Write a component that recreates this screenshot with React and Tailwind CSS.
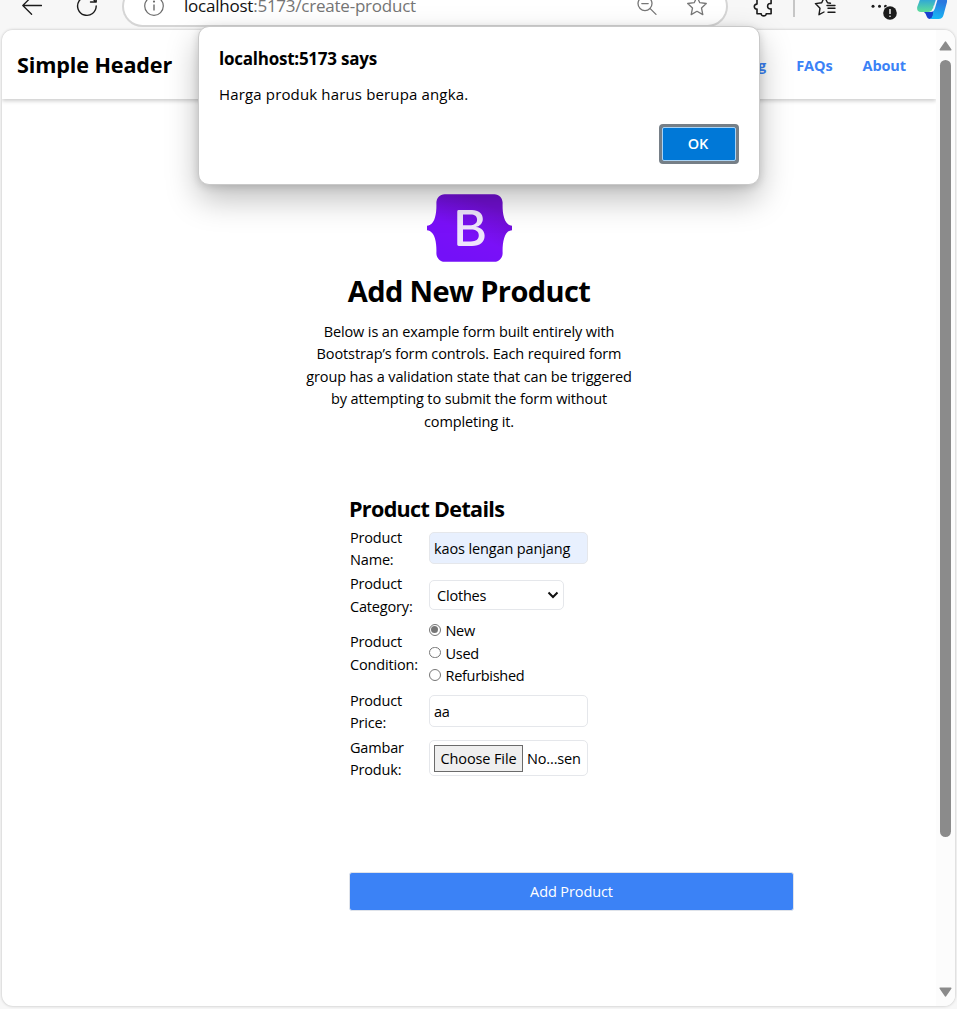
import React from "react";

function Toolbar() {
  return (
    <div className="h-[30px] shrink-0 overflow-hidden">
      <div className="-mt-[14px] flex h-10 items-center text-[#1b1b1b]">
        <svg className="ml-[22px] h-5 w-5 shrink-0" viewBox="0 0 20 20" fill="none" stroke="currentColor" strokeWidth="1.3" strokeLinecap="round" strokeLinejoin="round">
          <path d="M19.5 9.5H.8M9.6 .7.8 9.5l8.8 8.8" />
        </svg>
        <svg className="ml-[35px] h-5 w-5 shrink-0 overflow-visible" viewBox="0 0 20 20" fill="none" stroke="currentColor" strokeWidth="1.4" strokeLinecap="round" strokeLinejoin="round">
          <path d="M19.2 10A9.3 9.3 0 1 1 16.8 3.8L18.8 6M19.2 .5V6H13.5" />
        </svg>
        <div className="ml-[25px] flex h-[41px] w-[606px] shrink-0 items-center rounded-full border-2 border-t-0 border-[#d5d5d5] bg-white pl-[20px] pt-px">
          <svg className="h-5 w-5 shrink-0" viewBox="0 0 20 20" fill="none" stroke="#6b6b6b" strokeWidth="1.2">
            <circle cx="10" cy="10" r="9.3" />
            <path d="M10 8.5v6" strokeWidth="1.4" />
            <circle cx="10" cy="5.6" r=".5" fill="#6b6b6b" />
          </svg>
          <span className="ml-[20px] w-[453px] whitespace-nowrap text-[17px] leading-none tracking-[-0.230px] text-[#757575]"><span className="text-[#111]">localhost</span>:5173/create-product</span>
          <svg className="h-5 w-5 shrink-0 overflow-visible" viewBox="0 0 20 20" fill="none" stroke="#777" strokeWidth="1.3" strokeLinecap="round">
            <circle cx="8" cy="7.6" r="7" />
            <path d="m13.2 12.6 5.8 5.8M4.8 7.6h6.4" />
          </svg>
          <svg className="ml-[30px] h-5 w-5 shrink-0 overflow-visible" viewBox="0 0 20 20" fill="none" stroke="#777" strokeWidth="1.3" strokeLinejoin="round">
            <path d="m10 .8 2.8 5.9 6.5.8-4.8 4.5 1.3 6.6-5.8-3.3-5.8 3.3L5.5 12 .7 7.5l6.5-.8z" />
          </svg>
        </div>
        <svg className="ml-[26px] h-5 w-5 shrink-0 overflow-visible" viewBox="0 0 20 20" fill="none" stroke="currentColor" strokeWidth="1.6" strokeLinejoin="round">
          <path d="M3 3h4.2a2.6 2.6 0 0 1 5 0h4.9v4.600c-2-.5-3.500.6-3.500 2.600s1.500 3.100 3.500 2.600v5h-4.900c.2 2.700-5.200 2.700-5 0H3v-4.700c-3.600.1-3.600-5.100 0-5z" />
        </svg>
        <div className="ml-[19px] h-[22px] w-[2px] shrink-0 bg-[#c6c6c6]" />
        <svg className="ml-[20px] h-5 w-[21px] shrink-0 overflow-visible" viewBox="0 0 21 20" fill="none" stroke="currentColor" strokeWidth="1.4" strokeLinejoin="round" strokeLinecap="round">
          <path d="M15.5 7.2 12.5 6.7 9.5.8 6.7 6.7.4 7.6l4.6 4.6-1 6.500 5-2.700M12 9.500h8M13 12.300h7M13 16.200h7" />
        </svg>
        <svg className="ml-[35px] h-[20px] w-[27px] shrink-0 overflow-visible" viewBox="0 0 27 20" fill="#1b1b1b">
          <circle cx="2" cy="10.300" r="1.500" />
          <circle cx="8.500" cy="10.300" r="1.500" />
          <circle cx="14.500" cy="10.300" r="1.500" />
          <circle cx="19" cy="17" r="7.500" fill="#f7f7f7" />
          <circle cx="19" cy="17" r="6.800" />
          <path d="M19 13v5" stroke="#fff" strokeWidth="1.400" />
          <circle cx="19" cy="20.300" r=".8" fill="#fff" />
        </svg>
        <svg className="ml-[19px] h-[30px] w-[30px] shrink-0 overflow-visible" viewBox="0 0 30 30">
          <defs>
            <linearGradient id="cpLeft" x1="0" y1="0" x2="0" y2="1">
              <stop offset=".3" stopColor="#2fa6d8" />
              <stop offset=".95" stopColor="#5bdb9c" />
            </linearGradient>
            <linearGradient id="cpRight" x1=".6" y1="0" x2=".4" y2="1">
              <stop offset=".2" stopColor="#2b78df" />
              <stop offset="1" stopColor="#18b8f4" />
            </linearGradient>
          </defs>
          <path d="M8 21h6l3-1-1 5q-.8 3-3 3-2.500 0-3.500-3-.6-2.500-2.500-4z" fill="#1740cf" />
          <path d="M18 6h9q3.500 0 3 5l-3.500 13q-1 4-5 4H12.500q2.500-.5 3.300-4z" fill="url(#cpRight)" />
          <path d="M5 3h15.500l-4.500 14q-1.200 4-5 4H4q-4.500 0-3.800-5z" fill="url(#cpLeft)" />
          <path d="M20 7.500l-2.800 9.500q-.6 1.800-1.800 3" fill="none" stroke="#f7f7f7" strokeWidth="1.600" />
        </svg>
      </div>
    </div>
  );
}

function Header() {
  return (
    <header className="flex h-[69px] shrink-0 items-center justify-between bg-white pl-[15px] pr-[30px] pt-[2px] shadow-[0_2px_4px_rgba(0,0,0,0.2)]">
      <h1 className="text-[21.600px] font-bold tracking-[-0.130px] text-black">Simple Header</h1>
      <nav className="flex gap-[30px] text-[14.500px] font-bold tracking-[-0.100px] text-[#3b82f6]">
        <a>Blog</a>
        <a>FAQs</a>
        <a>About</a>
      </nav>
    </header>
  );
}

function BootstrapLogo() {
  return (
    <svg className="h-[68px] w-[85px]" viewBox="0 0 118 94">
      <defs>
        <linearGradient id="shell" x1="76" y1="10.800" x2="40" y2="90" gradientUnits="userSpaceOnUse">
          <stop stopColor="#6f0fce" />
          <stop offset=".55" stopColor="#7a10f8" />
          <stop offset="1" stopColor="#7410f8" />
        </linearGradient>
      </defs>
      <path fill="url(#shell)" fillRule="evenodd" d="M24.509 0c-6.733 0-11.715 5.893-11.492 12.284.214 6.140-.064 14.092-2.066 20.577C8.943 39.365 5.547 43.485 0 44.014v5.972c5.547.529 8.943 4.649 10.951 11.153 2.002 6.485 2.280 14.437 2.066 20.577C12.794 88.106 17.776 94 24.510 94H93.500c6.733 0 11.714-5.893 11.491-12.284-.214-6.140.064-14.092 2.066-20.577 2.009-6.504 5.396-10.624 10.943-11.153v-5.972c-5.547-.529-8.934-4.649-10.943-11.153-2.002-6.484-2.280-14.437-2.066-20.577C105.214 5.894 100.233 0 93.500 0H24.508z" />
      <path fill="#eee4fb" fillRule="evenodd" d="M80 57.863C80 66.663 73.436 72 62.543 72H44a2 2 0 01-2-2V24a2 2 0 012-2h18.437c9.083 0 15.044 4.920 15.044 12.474 0 5.302-4.010 10.049-9.119 10.880v.277C75.317 46.394 80 51.210 80 57.863zM60.521 28.340H49.948v14.934h8.905c6.884 0 10.680-2.772 10.680-7.727 0-4.643-3.264-7.207-9.012-7.207zM49.948 49.200v16.458H60.910c7.167 0 10.964-2.876 10.964-8.281 0-5.406-3.903-8.178-11.425-8.178H49.948z" />
    </svg>
  );
}

function Intro() {
  const lines = [
    "Below is an example form built entirely with",
    "Bootstrap’s form controls. Each required form",
    "group has a validation state that can be triggered",
    "by attempting to submit the form without",
    "completing it.",
  ];
  return (
    <section className="flex flex-col items-center pt-[95px]">
      <BootstrapLogo />
      <h2 className="mt-[6px] text-[29px] font-bold leading-[45px] tracking-[-0.600px]">Add New Product</h2>
      <p className="mt-[7.500px] text-center leading-[22.500px] tracking-[-0.120px]">
        {lines.map((line) => (
          <span key={line} className="block whitespace-nowrap">{line}</span>
        ))}
      </p>
    </section>
  );
}

function Label({ first, second }) {
  return (
    <span className="block w-[79px] shrink-0 leading-[22.500px] tracking-[-0.170px]">
      {first}
      <br />
      {second}
    </span>
  );
}

function Radio({ label, checked }) {
  return (
    <div className="flex h-[22.500px] items-center gap-[5px]">
      <span className="mb-[3px] flex h-[11.500px] w-[11.500px] items-center justify-center rounded-full border border-[#767676]">
        {checked && <span className="h-[7px] w-[7px] rounded-full bg-[#767676]" />}
      </span>
      <span>{label}</span>
    </div>
  );
}

function ProductForm() {
  return (
    <section className="ml-[348px] mt-[58.500px] w-[443px]">
      <h3 className="-ml-px text-[21.600px] font-bold leading-[34px] tracking-[-0.700px]">Product Details</h3>
      <div className="mt-px flex h-[45px] items-center">
        <Label first="Product" second="Name:" />
        <div className="mb-[2px] flex h-8 w-[159px] items-center rounded-[5px] border border-[#e5e7eb] bg-[#e8f0fe] px-1 pt-px tracking-[-0.130px]">kaos lengan panjang</div>
      </div>
      <div className="mt-[1.500px] flex h-[45px] items-center">
        <Label first="Product" second="Category:" />
        <div className="mb-[2px] flex h-[30px] w-[135px] items-center justify-between rounded-[5px] border border-[#e5e7eb] bg-white pl-[7px] pr-1 pt-px">
          <span className="pt-[2px] tracking-[-0.200px]">Clothes</span>
          <svg className="h-3 w-3" viewBox="0 0 12 12" fill="none" stroke="#111" strokeWidth="2">
            <path d="M1.500 3.500 6 8l4.500-4.500" />
          </svg>
        </div>
      </div>
      <div className="mt-[2px] flex h-[67.500px] items-center">
        <Label first="Product" second="Condition:" />
        <div>
          <Radio label="New" checked />
          <Radio label="Used" />
          <Radio label="Refurbished" />
        </div>
      </div>
      <div className="mt-[2px] flex h-[45px] items-center">
        <Label first="Product" second="Price:" />
        <div className="mb-[2px] flex h-8 w-[159px] items-center rounded-[5px] border border-[#e5e7eb] bg-white px-1 pt-px">aa</div>
      </div>
      <div className="mt-[2px] flex h-[45px] items-center">
        <Label first="Gambar" second="Produk:" />
        <div className="mb-[2px] flex h-[36px] w-[159px] items-center whitespace-nowrap rounded-[5px] border border-[#e5e7eb] bg-white pl-1">
          <span className="flex h-[27px] w-[89px] items-center justify-center border border-[#6b6b6b] bg-[#efefef] pt-px tracking-[-0.120px]">Choose File</span>
          <span className="ml-1 pt-px tracking-[-0.150px]">No...sen</span>
        </div>
      </div>
      <div className="-ml-px mt-[90.500px] flex h-[38.500px] w-[445px] items-center justify-center rounded-[3px] border border-[#dfe3ea] bg-[#3b82f6] pt-px tracking-[-0.100px] text-white">Add Product</div>
    </section>
  );
}

function Scrollbar() {
  return (
    <div className="flex w-[19px] shrink-0 flex-col items-center bg-[#fcfcfc] pb-[9px] pt-[11px]">
      <svg className="h-[10px] w-[13px] shrink-0" viewBox="0 0 13 10">
        <path d="M6.500 1.200 11.700 8.800H1.300z" fill="#8b8b8b" stroke="#8b8b8b" strokeWidth="1.600" strokeLinejoin="round" />
      </svg>
      <div className="mt-[9px] h-[777px] w-[11px] shrink-0 rounded-full bg-[#8b8b8b]" />
      <svg className="mt-auto h-[10px] w-[13px] shrink-0" viewBox="0 0 13 10">
        <path d="M6.500 8.800 1.300 1.200h10.400z" fill="#8b8b8b" stroke="#8b8b8b" strokeWidth="1.600" strokeLinejoin="round" />
      </svg>
    </div>
  );
}

function AlertDialog() {
  return (
    <div className="absolute left-[198px] top-[26px] flex h-[159px] w-[562px] flex-col rounded-[11px] border border-[#c9c9c9] bg-white px-5 shadow-[0_14px_32px_rgba(0,0,0,0.26),0_2px_8px_rgba(0,0,0,0.14)]">
      <div className="mt-[20px] text-[17px] font-bold leading-6 tracking-[-0.240px] text-black">localhost:5173 says</div>
      <div className="mt-[11px] text-[15px] leading-6 tracking-[0.150px]">Harga produk harus berupa angka.</div>
      <div className="ml-auto mt-[18px] flex h-10 w-20 items-center justify-center rounded-[4px] bg-[#767f87] p-[3px]">
        <div className="flex h-full w-full items-center justify-center rounded-[2px] border border-[#a9d3f5] bg-[#0078d7] pr-[2px] text-[14.500px] font-semibold tracking-[-0.100px] text-white">OK</div>
      </div>
    </div>
  );
}

export default function App() {
  return (
    <div className="relative flex h-[1009px] w-[957px] flex-col overflow-hidden bg-[#f7f7f7] font-['Open_Sans','Noto_Sans',sans-serif] text-[14.500px] tracking-[-0.300px] text-black">
      <Toolbar />
      <div className="ml-[2px] flex h-[976px] w-[953px] shrink-0 overflow-hidden rounded-[11px] bg-white shadow-[0_0_3px_rgba(0,0,0,0.25)]">
        <main className="flex w-[934px] shrink-0 flex-col overflow-hidden">
          <Header />
          <Intro />
          <ProductForm />
        </main>
        <Scrollbar />
      </div>
      <AlertDialog />
    </div>
  );
}
